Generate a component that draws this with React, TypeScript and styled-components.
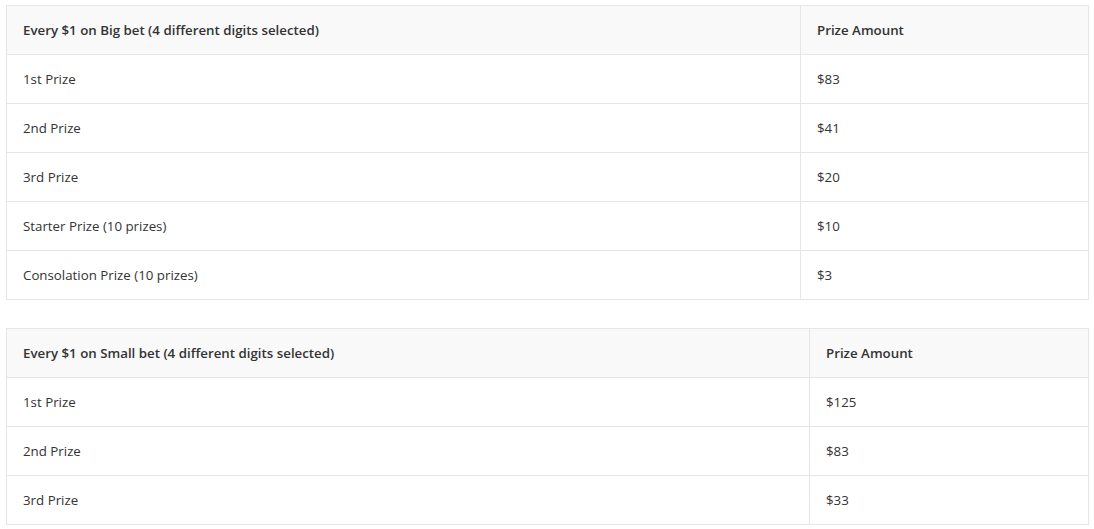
import React from "react";
import styled, { createGlobalStyle } from "styled-components";

const GlobalStyle = createGlobalStyle`
  html, body {
    margin: 0;
    padding: 0;
    background: #fff;
  }
  body {
    font-family: "Open Sans", "Noto Sans", sans-serif;
    color: #333;
  }
`;

const Page = styled.div`
  display: flex;
  flex-direction: column;
  gap: 28px;
  padding: 5px 5px 0 6px;
`;

const STable = styled.table`
  width: 1083px;
  border-collapse: collapse;
  table-layout: fixed;
  font-size: 13.3px;
`;

const SHeadCell = styled.th<{ $width?: number }>`
  box-sizing: border-box;
  width: ${(p) => (p.$width ? `${p.$width}px` : "auto")};
  height: 49px;
  padding: 0 16px;
  text-align: left;
  font-weight: 600;
  color: #333;
  background: #f9f9f9;
  border: 1px solid #e6e6e6;
`;

const SCell = styled.td`
  box-sizing: border-box;
  height: 49px;
  padding: 0 16px;
  color: #333;
  border: 1px solid #e6e6e6;
`;

type Row = { name: string; amount: string };

const bigRows: Row[] = [
  { name: "1st Prize", amount: "$83" },
  { name: "2nd Prize", amount: "$41" },
  { name: "3rd Prize", amount: "$20" },
  { name: "Starter Prize (10 prizes)", amount: "$10" },
  { name: "Consolation Prize (10 prizes)", amount: "$3" },
];

const smallRows: Row[] = [
  { name: "1st Prize", amount: "$125" },
  { name: "2nd Prize", amount: "$83" },
  { name: "3rd Prize", amount: "$33" },
];

function PrizeTable({ title, rows, firstWidth }: { title: string; rows: Row[]; firstWidth: number }) {
  return (
    <STable>
      <thead>
        <tr>
          <SHeadCell $width={firstWidth}>{title}</SHeadCell>
          <SHeadCell>Prize Amount</SHeadCell>
        </tr>
      </thead>
      <tbody>
        {rows.map((r) => (
          <tr key={r.name}>
            <SCell>{r.name}</SCell>
            <SCell>{r.amount}</SCell>
          </tr>
        ))}
      </tbody>
    </STable>
  );
}

export default function App() {
  return (
    <>
      <GlobalStyle />
      <Page>
        <PrizeTable title="Every $1 on Big bet (4 different digits selected)" rows={bigRows} firstWidth={794} />
        <PrizeTable title="Every $1 on Small bet (4 different digits selected)" rows={smallRows} firstWidth={803} />
      </Page>
    </>
  );
}
